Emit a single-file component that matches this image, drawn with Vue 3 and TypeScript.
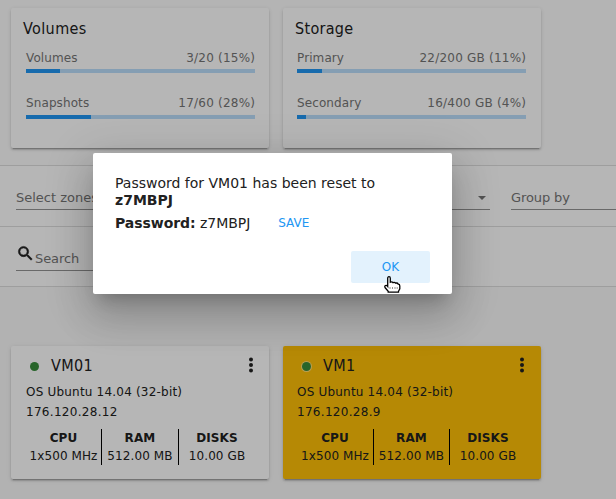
<script setup lang="ts">
interface Quota { label: string; value: string; percent: number }
interface QuotaCard { title: string; rows: Quota[] }
interface Spec { name: string; value: string }
interface Machine { name: string; os: string; ip: string; color: string; specs: Spec[] }

const quotas: QuotaCard[] = [
  {
    title: 'Volumes',
    rows: [
      { label: 'Volumes', value: '3/20 (15%)', percent: 15 },
      { label: 'Snapshots', value: '17/60 (28%)', percent: 28.3 },
    ],
  },
  {
    title: 'Storage',
    rows: [
      { label: 'Primary', value: '22/200 GB (11%)', percent: 11 },
      { label: 'Secondary', value: '16/400 GB (4%)', percent: 4 },
    ],
  },
]

const specs: Spec[] = [
  { name: 'CPU', value: '1x500 MHz' },
  { name: 'RAM', value: '512.00 MB' },
  { name: 'DISKS', value: '10.00 GB' },
]

const machines: Machine[] = [
  { name: 'VM01', os: 'OS Ubuntu 14.04 (32-bit)', ip: '176.120.28.12', color: 'plain', specs },
  { name: 'VM1', os: 'OS Ubuntu 14.04 (32-bit)', ip: '176.120.28.9', color: 'amber', specs },
]
</script>

<template>
  <div class="screen">
    <main class="page">
      <section class="quotas">
        <article v-for="card in quotas" :key="card.title" class="card quota-card">
          <h2 class="quota-title">{{ card.title }}</h2>
          <div v-for="row in card.rows" :key="row.label" class="quota">
            <div class="quota-text">
              <span>{{ row.label }}</span>
              <span class="quota-value">{{ row.value }}</span>
            </div>
            <div class="bar"><div class="bar-fill" :style="{ width: row.percent + '%' }"></div></div>
          </div>
        </article>
      </section>

      <section class="filters">
        <div class="field zones">
          <span>Select zones</span>
          <svg class="caret" width="8" height="4" viewBox="0 0 8 4"><path d="M0 0h8L4 4z" /></svg>
        </div>
        <div class="field grouping"><span>Group by</span></div>
      </section>

      <section class="search">
        <div class="field search-field">
          <svg class="lens" width="19" height="19" viewBox="0 0 24 24">
            <path d="M15.5 14h-.79l-.28-.27A6.47 6.47 0 0 0 16 9.5 6.5 6.5 0 1 0 9.5 16c1.61 0 3.09-.59 4.23-1.57l.27.28v.79l5 4.99L20.49 19l-4.99-5zm-6 0a4.5 4.5 0 1 1 0-9 4.5 4.5 0 0 1 0 9z" />
          </svg>
          <span>Search</span>
        </div>
      </section>

      <section class="machines">
        <article v-for="vm in machines" :key="vm.name" class="card vm-card" :class="vm.color">
          <header class="vm-header">
            <i class="status"></i>
            <h3 class="vm-name">{{ vm.name }}</h3>
            <svg class="more" width="4" height="16" viewBox="0 0 4 16">
              <circle cx="2" cy="2.4" r="2" /><circle cx="2" cy="8" r="2" /><circle cx="2" cy="13.6" r="2" />
            </svg>
          </header>
          <p class="vm-line">{{ vm.os }}</p>
          <p class="vm-line ip">{{ vm.ip }}</p>
          <div class="specs">
            <div v-for="spec in vm.specs" :key="spec.name" class="spec">
              <b>{{ spec.name }}</b>
              <span>{{ spec.value }}</span>
            </div>
          </div>
        </article>
      </section>
    </main>

    <div class="overlay">
      <div class="dialog" role="dialog">
        <p class="message">Password for VM01 has been reset to <b>z7MBPJ</b></p>
        <div class="password">
          <span><b>Password:</b> z7MBPJ</span>
          <button class="save">SAVE</button>
        </div>
        <div class="actions">
          <button class="ok">OK</button>
        </div>
        <svg class="pointer" width="17" height="17" viewBox="0 0 17 17">
          <path d="M3.700 9.800V2.200q0-1.500 1.300-1.500t1.300 1.500v4q1.700-.9 2.700.4 1.700-.8 2.700.6 1.700-.6 2.500.9 1.600 0 1.600 1.800v2.900l-1.300 2.500v.9H4.200v-1L1.200 11.800q-.9-1.500.2-2.300 1.200-.6 2.300.9z" />
          <path class="knuckles" d="M6 11v2M8.500 11v2M11 11v2M13.200 11v2" />
        </svg>
      </div>
    </div>
  </div>
</template>

<style>
body { margin: 0; overflow: hidden; }
</style>

<style scoped>
* { box-sizing: border-box; }
.screen {
  position: relative;
  width: 616px;
  height: 499px;
  overflow: hidden;
  background: #fafafa;
  font-family: "DejaVu Sans", sans-serif;
  font-size: 12px;
  color: #212121;
}
h2, h3, p { margin: 0; font-weight: 400; }
button { font: inherit; border: 0; padding: 0; background: none; color: #2196f3; }
.page { display: flex; flex-direction: column; height: 499px; }
.card {
  width: 258px;
  border-radius: 2px;
  background: #fff;
  box-shadow: 0 3px 1px -2px rgba(0, 0, 0, .2), 0 2px 2px rgba(0, 0, 0, .14), 0 1px 5px rgba(0, 0, 0, .12);
}
.quotas, .machines { display: flex; gap: 14px; padding-left: 11px; }
.quotas { height: 165px; padding-top: 8px; background: #fdfdfd; }
.quota-card { height: 140px; padding: 9px 14px 0 15px; }
.card + .card { padding-left: 14px; padding-right: 15px; }
.quota-title, .vm-name {
  font-family: "DejaVu Sans Condensed", "DejaVu Sans", sans-serif;
  font-stretch: condensed;
  font-size: 16px;
  line-height: 24px;
  letter-spacing: .4px;
}
.quota-title { margin-left: -3px; margin-bottom: 8px; }
.card + .card .quota-title { margin-left: -2px; letter-spacing: .3px; }
.quota { height: 46px; color: #757575; }
.quota-text { display: flex; justify-content: space-between; line-height: 18px; height: 20px; letter-spacing: .1px; }
.quota-value { letter-spacing: .22px; margin-right: -.2px; }
.quota + .quota { margin-top: -1px; }
.quota + .quota .quota-text { height: 21px; }
.bar { height: 4px; background: #bbdefb; }
.bar-fill { height: 4px; background: #2196f3; }
.filters, .search { height: 61px; border-top: 1px solid #dedede; background: #fff; padding-left: 16px; display: flex; }
.filters { gap: 21px; }
.field { display: flex; height: 44px; border-bottom: 1px solid #949494; color: #757575; font-size: 13px; line-height: 20px; padding-top: 22px; }
.zones { width: 474px; justify-content: space-between; }
.caret { margin: 8px 4px 0 0; fill: #757575; }
.grouping { flex: 1; letter-spacing: -.1px; }
.search { height: 60px; }
.search-field { width: 310px; padding-top: 16px; letter-spacing: -.1px; }
.search-field span { padding-top: 6px; }
.lens { margin: 1px 0 0; fill: #212121; stroke: #212121; stroke-width: .7; }
.machines { flex: 1; border-top: 1px solid #dedede; padding-top: 59px; }
.vm-card { height: 133px; padding: 8px 14px 0 15px; }
.amber { background: #ffc107; }
.vm-header { display: flex; height: 28px; align-items: flex-start; }
.status { width: 9px; height: 9px; margin: 8px 12px 0 4px; border-radius: 50%; background: #388e3c; }
.amber .status { margin-left: 5px; box-shadow: 0 0 0 1px rgba(255, 255, 255, .45); }
.more { margin: 3px 2px 0 auto; fill: #212121; }
.vm-line { line-height: 20px; letter-spacing: .2px; }
.ip { letter-spacing: .3px; }
.specs { display: grid; grid-template-columns: 76px 77px 76px; height: 36px; margin-top: 7px; }
.amber .specs { grid-template-columns: 77px 76px 76px; }
.spec { display: flex; flex-direction: column; align-items: center; line-height: 18px; white-space: nowrap; letter-spacing: .1px; border-right: 1px solid #000; }
.spec:last-child { border-right: 0; }
.overlay {
  position: absolute;
  inset: 0;
  padding: 153px 0 0 93px;
  background: rgba(0, 0, 0, .288);
}
.dialog {
  position: relative;
  width: 359px;
  height: 141px;
  padding: 22px 22px 0;
  border-radius: 2px;
  background: #fff;
  font-size: 14px;
  box-shadow: 0 11px 15px -7px rgba(0, 0, 0, .2), 0 24px 38px 3px rgba(0, 0, 0, .14), 0 9px 46px 8px rgba(0, 0, 0, .12);
}
.message { width: 290px; line-height: 17px; height: 39px; }
.message b { display: block; }
.password { display: flex; align-items: center; height: 18px; }
.password span { letter-spacing: -.05px; }
.save { margin-left: 28px; font-size: 12px; }
.actions { display: flex; justify-content: flex-end; margin-top: 19px; }
.ok { width: 79px; height: 32px; border-radius: 2px; background: #e3f2fd; font-size: 12px; }
.pointer { position: absolute; left: 291px; top: 123px; fill: #fff; stroke: #000; stroke-width: 1.3; }
.knuckles { fill: none; stroke: #777; stroke-width: .8; }
</style>
